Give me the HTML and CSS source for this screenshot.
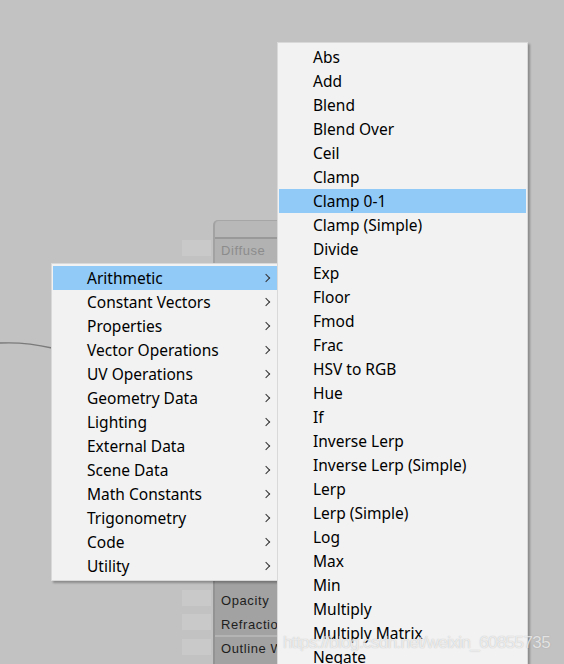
FILE: index.html
```html
<!DOCTYPE html>
<html lang="en">
<head>
  <meta charset="UTF-8">
  <title>Node Menu</title>
  <link rel="stylesheet" href="styles.css">
</head>
<body>
  <div class="canvas">
    <svg class="wire" width="60" height="20" viewBox="0 0 60 20">
      <path d="M0 4 C20 3 35 5 52 9" fill="none" stroke="#7a7a7a" stroke-width="1.3"/>
    </svg>

    <!-- node panel behind the menus -->
    <div class="port" style="top:240px"></div>
    <div class="node node-top">
      <div class="node-head"></div>
      <div class="node-row dim">Diffuse</div>
    </div>

    <div class="port" style="top:590px"></div>
    <div class="port" style="top:614px"></div>
    <div class="port" style="top:639px"></div>
    <div class="node node-bottom">
      <div class="node-row">Opacity</div>
      <div class="node-row sep">Refraction</div>
      <div class="node-row">Outline Width</div>
    </div>

    <!-- category menu -->
    <ul class="menu menu-cats">
      <li class="active">Arithmetic<span class="arrow"></span></li>
      <li>Constant Vectors<span class="arrow"></span></li>
      <li>Properties<span class="arrow"></span></li>
      <li>Vector Operations<span class="arrow"></span></li>
      <li>UV Operations<span class="arrow"></span></li>
      <li>Geometry Data<span class="arrow"></span></li>
      <li>Lighting<span class="arrow"></span></li>
      <li>External Data<span class="arrow"></span></li>
      <li>Scene Data<span class="arrow"></span></li>
      <li>Math Constants<span class="arrow"></span></li>
      <li>Trigonometry<span class="arrow"></span></li>
      <li>Code<span class="arrow"></span></li>
      <li>Utility<span class="arrow"></span></li>
    </ul>

    <!-- arithmetic submenu -->
    <ul class="menu menu-sub">
      <li>Abs</li>
      <li>Add</li>
      <li>Blend</li>
      <li>Blend Over</li>
      <li>Ceil</li>
      <li>Clamp</li>
      <li class="active">Clamp 0-1</li>
      <li>Clamp (Simple)</li>
      <li>Divide</li>
      <li>Exp</li>
      <li>Floor</li>
      <li>Fmod</li>
      <li>Frac</li>
      <li>HSV to RGB</li>
      <li>Hue</li>
      <li>If</li>
      <li>Inverse Lerp</li>
      <li>Inverse Lerp (Simple)</li>
      <li>Lerp</li>
      <li>Lerp (Simple)</li>
      <li>Log</li>
      <li>Max</li>
      <li>Min</li>
      <li>Multiply</li>
      <li>Multiply Matrix</li>
      <li>Negate</li>
    </ul>

    <div class="watermark">https://blog.csdn.net/weixin_60855735</div>
  </div>
</body>
</html>
```

FILE: styles.css
```css
html, body {
  margin: 0;
  padding: 0;
  height: 100%;
  overflow: hidden;
}

body {
  background-color: #c2c2c2;
  font-family: 'Noto Sans', 'Open Sans', sans-serif;
}

.canvas {
  position: relative;
  width: 564px;
  height: 664px;
  overflow: hidden;
}

.wire {
  position: absolute;
  left: 0;
  top: 339px;
}

.port {
  position: absolute;
  left: 182px;
  width: 29px;
  height: 16px;
  background-color: #c9c9c9;
}

.node {
  position: absolute;
  left: 213px;
  width: 120px;
  background-color: #b2b2b2;
  border-left: 2px solid #a2a2a2;
  font-family: 'Liberation Sans', Arial, sans-serif;
  font-size: 13px;
}

.node-top {
  top: 220px;
  height: 60px;
  border-top: 1px solid #a6a6a6;
  border-top-left-radius: 5px;
}

.node-head {
  height: 16px;
  background-color: #b8b8b8;
  border-bottom: 2px solid #999;
  border-top-left-radius: 5px;
}

.node-bottom {
  top: 578px;
  height: 90px;
  padding-top: 11px;
  background-color: #a2a2a2;
  border-left-color: #939393;
}

.node-row {
  height: 24px;
  line-height: 24px;
  padding-left: 6px;
  color: #1e1e1e;
  letter-spacing: 0.6px;
}

.node-row.dim {
  color: #8c8c8c;
  border-bottom: 1px solid #a8a8a8;
}

.node-row.sep {
  border-bottom: 2px solid #b4b4b4;
  height: 22px;
}

.menu {
  position: absolute;
  margin: 0;
  padding: 2px 1px;
  list-style: none;
  background-color: #f2f2f2;
  border: 1px solid #d9d9d9;
  box-shadow: 2px 2px 2px rgba(0, 0, 0, 0.28);
  font-size: 15.5px;
  color: #000;
}

.menu li {
  position: relative;
  height: 24px;
  line-height: 24px;
  padding-left: 34px;
  white-space: nowrap;
}

.menu li.active {
  background-color: #91c9f7;
}

.menu-cats {
  left: 51px;
  top: 263px;
  width: 226px;
}

.menu-sub {
  left: 277px;
  top: 42px;
  width: 247px;
}

.arrow {
  position: absolute;
  right: 10px;
  top: 9px;
  width: 5px;
  height: 5px;
  border-top: 1px solid #333;
  border-right: 1px solid #333;
  transform: rotate(45deg);
}

.watermark {
  position: absolute;
  left: 283px;
  top: 633px;
  font-family: 'Liberation Sans', Arial, sans-serif;
  font-size: 17px;
  letter-spacing: -0.6px;
  color: rgba(255, 255, 255, 0.7);
  text-shadow: 0 0 1px rgba(120, 120, 120, 0.5);
  white-space: nowrap;
}
```
